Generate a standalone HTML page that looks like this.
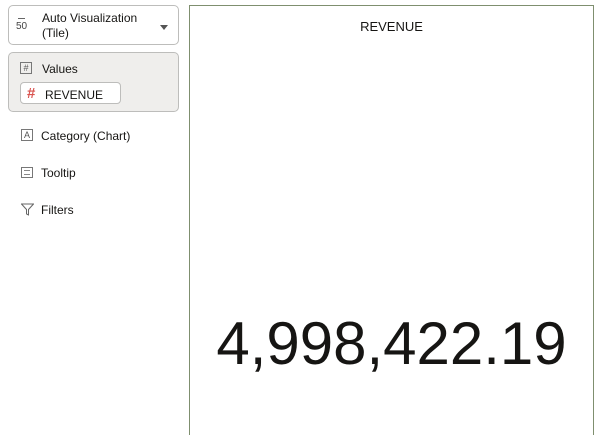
<!DOCTYPE html>
<html><head><style>
*{margin:0;padding:0;box-sizing:border-box}
body{width:600px;height:422px;background:#fff;font-family:"Liberation Sans",sans-serif;color:#161513;position:relative;overflow:hidden}
.abs{position:absolute}
.lbl{font-size:12px}
</style></head><body>
<div class="abs" style="left:8px;top:5px;width:171px;height:40px;border:1px solid #bdbdbb;border-radius:5px"></div>
<div class="abs" style="left:18px;top:18px;width:7px;height:1px;background:#666"></div>
<div class="abs" style="left:16px;top:21px;font-size:10px;color:#444">50</div>
<div class="abs lbl" style="left:42px;top:11px;line-height:15px">Auto Visualization<br>(Tile)</div>
<div class="abs" style="left:160px;top:25px;width:0;height:0;border-left:4px solid transparent;border-right:4px solid transparent;border-top:5px solid #555"></div>

<div class="abs" style="left:8px;top:52px;width:171px;height:60px;border:1px solid #bdbdbb;border-radius:5px;background:#efeeec"></div>
<div class="abs" style="left:20px;top:62px;width:12px;height:12px;border:1px solid #777;font-size:9px;line-height:10px;text-align:center;color:#555">#</div>
<div class="abs lbl" style="left:42px;top:62px">Values</div>
<div class="abs" style="left:20px;top:82px;width:101px;height:22px;border:1px solid #bdbdbb;border-radius:4px;background:#fff"></div>
<div class="abs" style="left:27px;top:86px;font-size:15px;color:#d9534f;line-height:16px;font-weight:bold">#</div>
<div class="abs lbl" style="left:45px;top:88px">REVENUE</div>

<div class="abs" style="left:21px;top:129px;width:12px;height:12px;border:1px solid #777;font-size:9px;line-height:10px;text-align:center;color:#555">A</div>
<div class="abs lbl" style="left:41px;top:129px">Category (Chart)</div>
<div class="abs" style="left:21px;top:167px;width:12px;height:11px;border:1px solid #777"><div style="margin:2px;height:5px;border-top:1px solid #888;border-bottom:1px solid #888"></div></div>
<div class="abs lbl" style="left:41px;top:166px">Tooltip</div>
<svg class="abs" style="left:21px;top:203px" width="13" height="13" viewBox="0 0 13 13"><path d="M0.5 1H12.5L7.5 6.5V12L5.5 11V6.5Z" fill="none" stroke="#666"/></svg>
<div class="abs lbl" style="left:41px;top:203px">Filters</div>

<div class="abs" style="left:189px;top:5px;width:405px;height:430px;border:1.5px solid #7f8f6f;border-bottom:none"></div>
<div class="abs" style="left:189px;top:19px;width:405px;text-align:center;font-size:13px">REVENUE</div>
<div class="abs" style="left:189px;top:309px;width:405px;text-align:center;font-size:60px;line-height:70px;transform:scaleX(1.0)">4,998,422.19</div>
</body></html>
